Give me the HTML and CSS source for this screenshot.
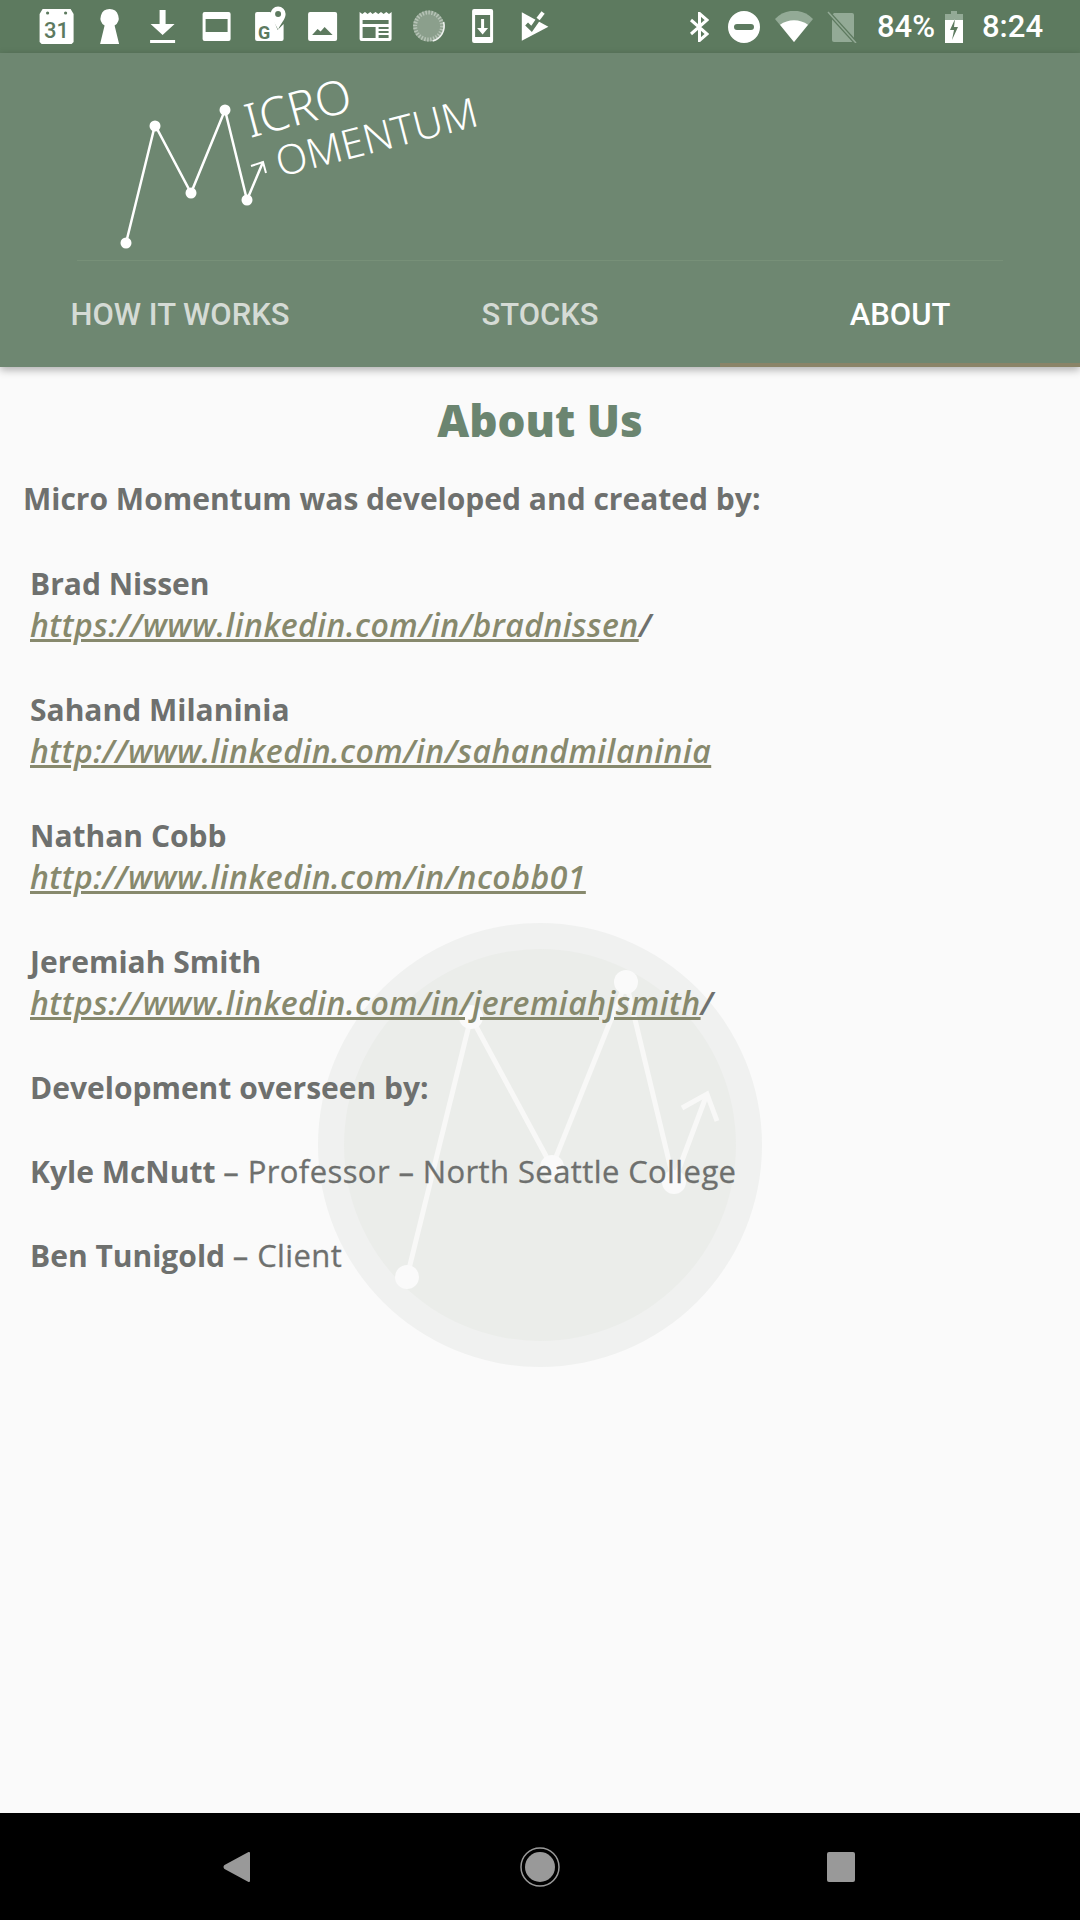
FILE: index.html
```html
<!DOCTYPE html>
<html lang="en">
<head>
  <meta charset="UTF-8" />
  <meta name="viewport" content="width=device-width, initial-scale=1.0"/>
  <title>Micro Momentum</title>
  <link rel="stylesheet" href="styles.css">
</head>
<body>

<div class="status-bar">
  <div class="status-left">
    <svg class="cell" viewBox="-26.5 0 53 53">
      <path class="w" d="M-14 9h28l3 5v28l-2 2h-30l-2-2V14z"/>
      <circle class="g" cx="-9" cy="13" r="1.6"/><circle class="g" cx="9" cy="13" r="1.6"/>
      <text class="cal-num" x="0" y="37.500">31</text>
    </svg>
    <svg class="cell" viewBox="-26.5 0 53 53">
      <path class="w" d="M0 9a9 9 0 0 1 5 16.5L9.500 44h-19L-5 25.500A9 9 0 0 1 0 9z"/>
    </svg>
    <svg class="cell" viewBox="-26.5 0 53 53">
      <path class="w" d="M-3 10h6v14h9L0 35-12 24h9zM-12.500 40h25v3h-25z"/>
    </svg>
    <svg class="cell" viewBox="-26.5 0 53 53">
      <path class="w" fill-rule="evenodd" d="M-12 12h24a2 2 0 0 1 2 2v25a2 2 0 0 1-2 2h-24a2 2 0 0 1-2-2V14a2 2 0 0 1 2-2zM-11 19v13h22V19z"/>
    </svg>
    <svg class="cell" viewBox="-26.500 0 53 53">
      <path class="w" d="M-12.500 12H1l7 18 6-6v15a2 2 0 0 1-2 2h-24.500a2 2 0 0 1-2-2V14a2 2 0 0 1 2-2z"/>
      <path class="w" fill-rule="evenodd" d="M8.500 6.500a7.500 7.500 0 0 1 7.500 7.500c0 5.500-5.500 10-7.500 16-2-6-7.500-10.500-7.500-16a7.500 7.500 0 0 1 7.500-7.500zM8.500 11a3 3 0 1 0 0 6 3 3 0 0 0 0-6z"/>
      <text class="maps-g" x="-5.500" y="38.500">G</text>
    </svg>
    <svg class="cell" viewBox="-26.500 0 53 53">
      <path class="w" fill-rule="evenodd" d="M-12.500 12h25a2 2 0 0 1 2 2v25a2 2 0 0 1-2 2h-25a2 2 0 0 1-2-2V14a2 2 0 0 1 2-2zM-10.500 35H10L2 27-2 31.500-5 29z"/>
    </svg>
    <svg class="cell" viewBox="-26.500 0 53 53">
      <path class="w" fill-rule="evenodd" d="M-16 12l2.700 2 2.700-2 2.600 2 2.700-2L-3 14l3-2 2.700 2 2.700-2 2.700 2 2.600-2 2.700 2 2.600-2v27a2 2 0 0 1-2 2h-28a2 2 0 0 1-2-2zM-13 20v4h26v-4zM-13 27v11H0V27zM3 27v2h10v-2zM3 31v2h10v-2zM3 35v3h10v-3z"/>
    </svg>
    <svg class="cell" viewBox="-26.500 0 53 53">
      <circle cx="0" cy="26" r="15.500" fill="#8b9f8c"/>
      <circle cx="0" cy="26" r="13.500" fill="none" stroke="#b6c3b6" stroke-width="4" stroke-dasharray="1.500 1.500"/>
      <path d="M4 41A15.500 15.500 0 0 0 15 22" fill="none" stroke="#eef1ee" stroke-width="1.600"/>
    </svg>
    <svg class="cell" viewBox="-26.500 0 53 53">
      <path class="w" fill-rule="evenodd" d="M-8.500 9H8.500a2 2 0 0 1 2 2v30a2 2 0 0 1-2 2H-8.500a2 2 0 0 1-2-2V11a2 2 0 0 1 2-2zM-7.500 15v22h15V15zM-1.500 19h3v9h4L0 34.500-5.500 28h4z"/>
    </svg>
    <svg class="cell" viewBox="-26.500 0 53 53">
      <path class="w" d="M-13.800 12.300L12.800 26.700-13.800 40.700z"/>
      <polyline class="check-cut" points="-9,24 -4,29 2.500,19.500"/>
      <polyline class="check-tail" points="2.500,19 7.500,12.500"/>
    </svg>
  </div>
  <div class="status-right">
    <svg class="sys bt" viewBox="0 0 19 30">
      <path d="M1 8l16 14-7.500 6.500V1.500L17 8 1 22" fill="none" stroke="#fff" stroke-width="3"/>
    </svg>
    <svg class="sys dnd" viewBox="0 0 32 32">
      <path class="w" fill-rule="evenodd" d="M16 0a16 16 0 1 1 0 32 16 16 0 0 1 0-32zM9 13a3 3 0 0 0 0 6h14a3 3 0 0 0 0-6z"/>
    </svg>
    <svg class="sys wifi" viewBox="0 0 38 31">
      <path d="M0 8C10-3 28-3 38 8L19 31z" fill="#93aa96"/>
      <path class="w" d="M5 13.800c8-6 20-6 28 0L19 31z"/>
    </svg>
    <svg class="sys sim" viewBox="0 0 30 32">
      <path d="M7 2h18a2 2 0 0 1 2 2v25a2 2 0 0 1-2 2H7a2 2 0 0 1-2-2V4z" fill="#93aa96"/>
      <path d="M1 1l28 31" stroke="#5d7a5f" stroke-width="4"/>
      <path d="M1 1l28 31" stroke="#93aa96" stroke-width="1.500"/>
    </svg>
    <span class="batt-text">84%</span>
    <svg class="sys batt" viewBox="0 0 18 32">
      <path d="M6 0h6v3H6zM0 3h18v6H0z" fill="#93aa96"/>
      <path class="w" fill-rule="evenodd" d="M0 9h18v23H0zM10 8L5 19h4l-2 10 6-13H9z"/>
    </svg>
    <span class="clock">8:24</span>
  </div>
</div>

<header class="app-bar">
  <div class="brand">
    <svg class="logo" viewBox="0 0 420 200">
      <polyline points="36,183 65,65 101,133 135,50 157,140 173,102" fill="none" stroke="#fff" stroke-width="2.500"/>
      <path d="M161 106L173 102 176 113" fill="none" stroke="#fff" stroke-width="2"/>
      <circle class="w" cx="36" cy="183" r="5.500"/>
      <circle class="w" cx="65" cy="66" r="5.500"/>
      <circle class="w" cx="101" cy="133" r="5.500"/>
      <circle class="w" cx="135" cy="50" r="5.500"/>
      <circle class="w" cx="157" cy="140" r="5.500"/>
      <text class="logo-big" transform="translate(160 78) rotate(-15)">ICRO</text>
      <text class="logo-small" transform="translate(190 117) rotate(-14.500)">OMENTUM</text>
    </svg>
    <div class="brand-line"></div>
  </div>
  <nav class="tabs">
    <a class="tab" href="#works">HOW IT WORKS</a>
    <a class="tab" href="#stocks">STOCKS</a>
    <a class="tab active" href="#about">ABOUT</a>
  </nav>
</header>

<main class="content" id="about">
  <svg class="watermark" viewBox="0 0 444 444">
    <circle cx="222" cy="222" r="222" fill="#f0f1f0"/>
    <circle cx="222" cy="222" r="196" fill="#ebedea"/>
    <polyline points="89,354 153,94 234,244 308,59 356,259 389,171" fill="none" stroke="#f8f8f7" stroke-width="5"/>
    <path d="M364 185L389 171 399 198" fill="none" stroke="#f8f8f7" stroke-width="5"/>
    <circle cx="89" cy="354" r="12" fill="#fafafa"/>
    <circle cx="153" cy="94" r="12" fill="#fafafa"/>
    <circle cx="234" cy="244" r="12" fill="#fafafa"/>
    <circle cx="308" cy="59" r="12" fill="#fafafa"/>
    <circle cx="356" cy="259" r="12" fill="#fafafa"/>
  </svg>

  <h1>About Us</h1>
  <p class="lead">Micro Momentum was developed and created by:</p>

  <div class="people">
    <p><b>Brad Nissen</b><br>
      <i><a href="#">https://www.linkedin.com/in/bradnissen</a>/</i></p>
    <p><b>Sahand Milaninia</b><br>
      <i><a href="#">http://www.linkedin.com/in/sahandmilaninia</a></i></p>
    <p><b>Nathan Cobb</b><br>
      <i><a href="#">http://www.linkedin.com/in/ncobb01</a></i></p>
    <p><b>Jeremiah Smith</b><br>
      <i><a href="#">https://www.linkedin.com/in/jeremiahjsmith</a>/</i></p>
    <p><b>Development overseen by:</b></p>
    <p><b>Kyle McNutt</b> <span class="role">– Professor – North Seattle College</span></p>
    <p><b>Ben Tunigold</b> <span class="role">– Client</span></p>
  </div>
</main>

<div class="nav-bar">
  <svg class="nav-icon" viewBox="0 0 28 30">
    <path d="M26 1v28L2 16a1.500 1.500 0 0 1 0-2z" fill="#999" stroke="#999" stroke-linejoin="round" stroke-width="2"/>
  </svg>
  <svg class="nav-icon home" viewBox="0 0 40 40">
    <circle cx="20" cy="20" r="19" fill="none" stroke="#999" stroke-width="1.500"/>
    <circle cx="20" cy="20" r="15" fill="#999"/>
  </svg>
  <svg class="nav-icon" viewBox="0 0 28 30">
    <rect x="0" y="0" width="28" height="30" rx="2" fill="#999"/>
  </svg>
</div>

</body>
</html>
```

FILE: styles.css
```css
:root {
  --status: #5d7a5f;
  --primary: #6e8771;
  --title: #6b8570;
  --text: #6e706e;
  --link: #87896d;
  --page: #fafafa;
}

* {
  box-sizing: border-box;
  margin: 0;
  padding: 0;
}

body {
  width: 1080px;
  height: 1920px;
  overflow: hidden;
  display: flex;
  flex-direction: column;
  font-family: "Open Sans", sans-serif;
  background: var(--page);
  color: var(--text);
}

.w {
  fill: #fff;
}

.g {
  fill: var(--status);
}

/* Status bar */
.status-bar {
  height: 53px;
  flex: none;
  display: flex;
  justify-content: space-between;
  background: var(--status);
  color: #fff;
  font-family: Roboto, sans-serif;
  font-weight: 500;
  font-size: 31px;
}

.status-left {
  display: flex;
  padding-left: 30px;
}

.cell {
  width: 53.2px;
  height: 53px;
}

.cal-num {
  font-family: Roboto, sans-serif;
  font-size: 22px;
  font-weight: 500;
  text-anchor: middle;
  fill: var(--status);
}

.maps-g {
  font-family: Roboto, sans-serif;
  font-size: 18px;
  font-weight: 700;
  text-anchor: middle;
  fill: var(--status);
}

.check-cut {
  fill: none;
  stroke: var(--status);
  stroke-width: 4;
}

.check-tail {
  fill: none;
  stroke: #fff;
  stroke-width: 4;
}

.status-right {
  display: flex;
  align-items: center;
  padding-right: 37px;
}

.sys {
  display: block;
  flex: none;
}

.bt {
  width: 19px;
  height: 30px;
  margin-right: 19px;
}

.dnd {
  width: 32px;
  height: 32px;
  margin-right: 15px;
}

.wifi {
  width: 38px;
  height: 31px;
  margin-right: 14px;
}

.sim {
  width: 30px;
  height: 32px;
  margin-right: 20px;
}

.batt-text {
  margin-right: 10px;
}

.batt {
  width: 18px;
  height: 32px;
  margin-right: 19px;
}

/* App bar */
.app-bar {
  height: 314px;
  flex: none;
  display: flex;
  flex-direction: column;
  background: var(--primary);
  box-shadow: 0 3px 8px rgba(0, 0, 0, 0.3);
  position: relative;
  z-index: 1;
}

.brand {
  height: 206px;
  flex: none;
}

.logo {
  display: block;
  width: 420px;
  height: 200px;
  margin-left: 90px;
  margin-top: 7px;
}

.logo-big {
  font-family: "Noto Sans", sans-serif;
  font-size: 47px;
  font-weight: 300;
  fill: #fff;
}

.logo-small {
  font-family: "Noto Sans", sans-serif;
  font-size: 41px;
  font-weight: 300;
  fill: #fff;
}

.brand-line {
  height: 1px;
  margin: 0 77px;
  background: #779078;
}

.tabs {
  flex: 1;
  display: grid;
  grid-template-columns: repeat(3, 1fr);
}

.tab {
  display: flex;
  align-items: center;
  justify-content: center;
  padding-top: 6px;
  border-bottom: 4px solid transparent;
  color: #d5dbd5;
  font-family: Roboto, sans-serif;
  font-size: 31px;
  font-weight: 500;
  text-decoration: none;
}

.tab.active {
  color: #fff;
  border-bottom-color: #8a8468;
}

/* About */
.content {
  flex: 1;
  position: relative;
  font-size: 30px;
  line-height: 42px;
}

.watermark {
  position: absolute;
  left: 318px;
  top: 556px;
  width: 444px;
  height: 444px;
}

h1 {
  position: relative;
  padding-top: 26px;
  color: var(--title);
  font-size: 44px;
  line-height: 54px;
  font-weight: 800;
  text-align: center;
}

.lead {
  position: relative;
  padding: 31px 0 0 23px;
  font-weight: 700;
}

.people {
  position: relative;
  padding: 43px 0 0 30px;
  display: flex;
  flex-direction: column;
  gap: 42px;
}

.people b {
  font-weight: 700;
}

.people i {
  font-size: 32px;
  line-height: 0;
  font-weight: 600;
  letter-spacing: 0.47px;
}

.people a {
  color: var(--link);
}

.role {
  font-size: 31px;
  line-height: 0;
  letter-spacing: 0.4px;
  -webkit-text-stroke: 0.3px var(--text);
}

/* Navigation bar */
.nav-bar {
  height: 107px;
  flex: none;
  display: flex;
  align-items: center;
  background: #000;
  padding-left: 223px;
}

.nav-icon {
  width: 28px;
  height: 30px;
}

.nav-icon.home {
  width: 40px;
  height: 40px;
  margin: 0 267px 0 269px;
}
```
